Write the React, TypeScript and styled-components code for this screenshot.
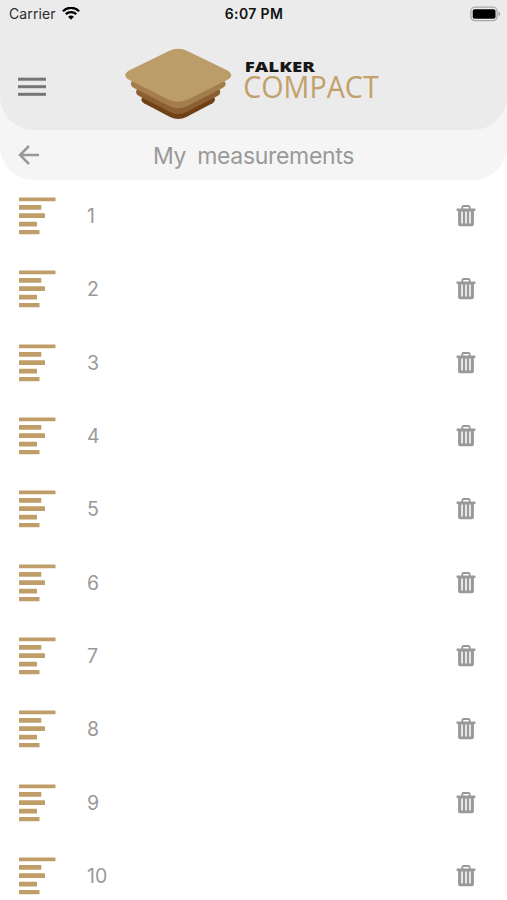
import React from "react";
import styled, { createGlobalStyle } from "styled-components";

const GlobalStyle = createGlobalStyle`
  *, *::before, *::after { box-sizing: border-box; }
  html, body { margin: 0; padding: 0; background: #fff; }
  body { overflow: hidden; font-family: Inter, "Liberation Sans", sans-serif; }
  svg { display: block; }
`;

const Screen = styled.div`
  width: 100%;
  height: 900px;
  overflow: hidden;
  background: #fff;
`;

const HeaderShell = styled.div`
  height: 179.5px;
  background: #f5f5f5;
  border-radius: 0 0 34px 34px;
`;

const Header = styled.header`
  height: 129.5px;
  background: #ebebeb;
  border-radius: 0 0 34px 34px;
`;

const StatusBar = styled.div`
  display: grid;
  grid-template-columns: 1fr auto 1fr;
  align-items: center;
  height: 28px;
  padding: 0 6px 0 9px;
  color: #111;
`;

const Carrier = styled.div`
  display: flex;
  align-items: center;
  gap: 6px;
  font-size: 14px;
  line-height: 28px;
  letter-spacing: 0.12px;
  color: #2c2c2c;
`;

const Clock = styled.div`
  font-size: 14px;
  line-height: 28px;
  font-weight: 600;
  letter-spacing: 0.35px;
  padding-right: 2px;
`;

const BatterySlot = styled.div`
  display: flex;
  justify-content: flex-end;
  padding-bottom: 1px;
`;

const Brand = styled.div`
  display: flex;
  align-items: flex-start;
  height: 101px;
  padding: 16px 0 0 15px;
`;

const IconButton = styled.button`
  display: flex;
  align-items: center;
  justify-content: center;
  border: 0;
  padding: 0;
  background: none;
  cursor: pointer;
`;

const MenuButton = styled(IconButton)`
  width: 33px;
  height: 33px;
  margin: 26px 73px 0 0;
`;

const TitleBar = styled.div`
  display: grid;
  grid-template-columns: 57px 1fr 57px;
  align-items: center;
  height: 50px;
`;

const Title = styled.h1`
  margin: 0;
  padding-top: 2px;
  text-align: center;
  font-size: 23px;
  line-height: 48px;
  font-weight: 400;
  letter-spacing: -0.32px;
  word-spacing: 5px;
  color: #999;
`;

const List = styled.ul`
  margin: 0;
  padding: 0;
  list-style: none;
`;

const Row = styled.li`
  display: grid;
  grid-template-columns: 68px 1fr 22px;
  align-items: center;
  height: 73.33px;
  padding: 0 30px 0 19px;
`;

const RowLabel = styled.span`
  font-size: 19.5px;
  line-height: 24px;
  color: #999;
`;

const Wordmark = styled.div`
  display: flex;
  flex-direction: column;
  width: 138px;
  margin: 15px 0 0 12px;
`;

const Wifi = () => (
  <svg width="18" height="14" viewBox="0 0 18 14" fill="none" stroke="#000" strokeWidth="2.3">
    <path d="M0.9 4.2C5.4 -.3 12.6 -.3 17.1 4.2" />
    <path d="M3.8 7.2C6.7 4.4 11.3 4.4 14.2 7.2" />
    <path d="M9 12.7 6.1 9.8C7.7 8.2 10.3 8.2 11.9 9.8Z" fill="#000" stroke="none" />
  </svg>
);

const Battery = () => (
  <svg width="31" height="16" viewBox="0 0 31 16">
    <rect x="0.9" y="1.2" width="26.2" height="13.4" rx="4" fill="#ececec" stroke="#a9a9a9" strokeWidth="1.3" />
    <rect x="2.7" y="3.3" width="22.8" height="9.4" rx="1.8" fill="#000" />
    <path d="M28.5 5.6c2.4.8 2.4 3.8 0 4.6z" fill="#a3a3a3" />
  </svg>
);

const Menu = () => (
  <svg width="28" height="20" viewBox="0 0 28 20" fill="#767676">
    <rect y="0.7" width="28" height="3" />
    <rect y="8.2" width="28" height="3" />
    <rect y="15.8" width="28" height="3" />
  </svg>
);

const Stack = () => (
  <svg width="111" height="80" viewBox="121 44 111 80">
    <path fill="#704117" d="M142 97.5Q140.2 101 144 103.2L170 117Q178.200 121.200 186.400 117L212.500 103.2Q216 101 214.500 97.5L178 85Z" />
    <path fill="#8c5f33" d="M136.8 89.5Q134.6 93.500 139 96L170 112Q178.200 116.5 186.400 112L217.500 96Q221.6 93.500 219.700 89.5L178 78Z" />
    <path fill="#a37d4b" d="M131.500 81.5Q129.300 85.500 134 88L169 106Q178.200 110.7 187.400 106L222.500 88Q227 85.500 225 81.5L178 70Z" />
    <path fill="#bc9c68" d="M168.500 51.200Q178.200 46.300 187.900 51.200L227.500 70.500Q235 75.500 227.500 79.800L187.900 99.5Q178.200 104 168.500 99.5L129 79.800Q121.500 75.500 129 70.500Z" />
  </svg>
);

const Logo = () => (
  <>
    <Stack />
    <Wordmark>
      <svg width="74" height="15" viewBox="0 0 74 15">
        <text x="0.8" y="12.6" fontFamily="Open Sans, sans-serif" fontWeight="800" fontSize="14" textLength="70" lengthAdjust="spacingAndGlyphs" fill="#161616">FALKER</text>
      </svg>
      <svg width="138" height="32" viewBox="0 0 138 32" overflow="visible">
        <text x="-0.8" y="24.2" fontFamily="Open Sans, sans-serif" fontWeight="400" fontSize="30.5" textLength="135.5" lengthAdjust="spacingAndGlyphs" fill="#c2a06a">COMPACT</text>
      </svg>
    </Wordmark>
  </>
);

const Back = () => (
  <svg width="22" height="20" viewBox="0 0 22 20" fill="none" stroke="#999" strokeWidth="2.5">
    <path d="M21 10H2M11 1 2 10l9 9" />
  </svg>
);

const Bars = () => (
  <svg width="37" height="38" viewBox="0 0 37 38" fill="#bf9e69">
    <rect y="0.5" width="36.5" height="3.8" rx="0.5" />
    <rect y="8" width="22.3" height="4.8" rx="0.5" />
    <rect y="16.3" width="26" height="4.8" rx="0.5" />
    <rect y="24.8" width="18" height="4.8" rx="0.5" />
    <rect y="33" width="20.5" height="4.2" rx="0.5" />
  </svg>
);

const Trash = () => (
  <svg width="20" height="22" viewBox="0 0 20 22">
    <path d="M6.3 4V2.2Q6.3 1 7.5 1h5Q13.7 1 13.7 2.2V4" fill="none" stroke="#999" strokeWidth="1.8" />
    <path d="M0.6 3.6H19.4V5.9H17.9V19.3Q17.9 21.3 15.9 21.3H4.1Q2.1 21.3 2.1 19.3V5.9H0.6Z" fill="#999" />
    <path d="M6 6.5V18.5M10 6.5V18.5M14 6.5V18.5" fill="none" stroke="#fff" strokeWidth="1.5" />
  </svg>
);

const measurements = Array.from({ length: 10 }, (_, i) => i + 1);

export default function App() {
  return (
    <Screen>
      <GlobalStyle />
      <HeaderShell>
        <Header>
          <StatusBar>
            <Carrier>Carrier <Wifi /></Carrier>
            <Clock>6:07 PM</Clock>
            <BatterySlot><Battery /></BatterySlot>
          </StatusBar>
          <Brand>
            <MenuButton aria-label="Menu"><Menu /></MenuButton>
            <Logo />
          </Brand>
        </Header>
        <TitleBar>
          <IconButton aria-label="Back"><Back /></IconButton>
          <Title>My measurements</Title>
        </TitleBar>
      </HeaderShell>
      <List>
        {measurements.map((n) => (
          <Row key={n}>
            <Bars />
            <RowLabel>{n}</RowLabel>
            <IconButton aria-label={`Delete ${n}`}><Trash /></IconButton>
          </Row>
        ))}
      </List>
    </Screen>
  );
}
